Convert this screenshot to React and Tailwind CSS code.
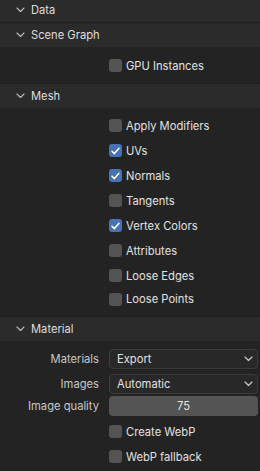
import React from "react";

const Chevron = ({ className = "" }) => (
  <svg className={className} width="9" height="6" viewBox="0 0 9 6" fill="none">
    <path d="M1 1l3.5 3.5L8 1" stroke="currentColor" strokeWidth="1.1" strokeLinecap="round" strokeLinejoin="round" />
  </svg>
);

function PanelHeader({ title, first }) {
  return (
    <div
      className={`flex items-center h-[25px] bg-[#2b2b2b] ${first ? "-mt-[3px]" : "border-t border-[#1f1f1f]"}`}
    >
      <Chevron className="ml-[16px] text-[#bdbdbd]" />
      <span className="ml-[6px] mt-[2px] text-[#dedede]">{title}</span>
    </div>
  );
}

function Check({ label, checked, h = "h-[25px]" }) {
  return (
    <div className={`flex items-center ${h} pl-[109px]`}>
      <div
        className={`w-[13px] h-[13px] rounded-[3px] flex items-center justify-center ${
          checked ? "bg-[#4772b3]" : "bg-[#545454]"
        }`}
      >
        {checked && (
          <svg width="9" height="8" viewBox="0 0 9 8" fill="none">
            <path d="M1 4.2l2.4 2.4L8 1.2" stroke="#ffffff" strokeWidth="1.5" strokeLinecap="round" strokeLinejoin="round" />
          </svg>
        )}
      </div>
      <span className="ml-[4px] mt-[2px] text-[#e2e2e2]">{label}</span>
    </div>
  );
}

function Dropdown({ label, value, className = "" }) {
  return (
    <div className={`flex items-center h-[20px] ${className}`}>
      <span className="w-[100px] mt-[2px] text-right pr-[1px] text-[#c8c8c8]">{label}</span>
      <div className="ml-[9px] w-[149px] h-[20px] flex items-center justify-between rounded-[4px] border border-[#3c3c3c] bg-[#282828] pl-[7px] pr-[4px]">
        <span className="mt-[2px] text-[#e2e2e2]">{value}</span>
        <Chevron className="text-[#d0d0d0]" />
      </div>
    </div>
  );
}

export default function App() {
  return (
    <div className="w-[260px] h-[471px] overflow-hidden bg-[#232323] text-[11.2px] font-['Inter',sans-serif] leading-none select-none">
      <PanelHeader title="Data" first />
      <PanelHeader title="Scene Graph" />
      <div className="pt-[6px] pb-[5px]">
        <Check label="GPU Instances" />
      </div>

      <PanelHeader title="Mesh" />
      <div className="pt-[5px] pb-[6px]">
        <Check label="Apply Modifiers" />
        <Check label="UVs" checked />
        <Check label="Normals" checked />
        <Check label="Tangents" />
        <Check label="Vertex Colors" checked />
        <Check label="Attributes" />
        <Check label="Loose Edges" />
        <Check label="Loose Points" h="h-[22px]" />
      </div>

      <PanelHeader title="Material" />
      <div className="pt-[8px]">
        <Dropdown label="Materials" value="Export" />
        <Dropdown label="Images" value="Automatic" className="mt-[5px]" />
        <div className="flex items-center h-[20px] mt-[2px]">
          <span className="w-[100px] mt-[2px] text-right pr-[1px] text-[#c8c8c8]">Image quality</span>
          <div className="ml-[9px] w-[149px] h-[20px] flex items-center justify-center rounded-[4px] bg-[#545454] text-[#e2e2e2]">
            <span className="mt-[2px]">75</span>
          </div>
        </div>
        <div className="mt-[3px]">
          <Check label="Create WebP" />
          <Check label="WebP fallback" />
        </div>
      </div>
    </div>
  );
}
